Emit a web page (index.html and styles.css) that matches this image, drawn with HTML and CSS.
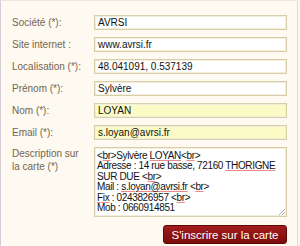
FILE: index.html
```html
<!DOCTYPE html>
<html>
<head>
    <title>Inscription</title>
    <link rel="stylesheet" href="styles.css">
</head>
<body>
    <form class="panel">
        <div class="row">
            <label>Société (*):</label>
            <div class="field">AVRSI</div>
        </div>
        <div class="row">
            <label>Site internet :</label>
            <div class="field">www.avrsi.fr</div>
        </div>
        <div class="row">
            <label>Localisation (*):</label>
            <div class="field">48.041091, 0.537139</div>
        </div>
        <div class="row">
            <label>Prénom (*):</label>
            <div class="field">Sylvère</div>
        </div>
        <div class="row">
            <label>Nom (*):</label>
            <div class="field filled">LOYAN</div>
        </div>
        <div class="row">
            <label>Email (*):</label>
            <div class="field filled">s.loyan@avrsi.fr</div>
        </div>
        <div class="row top">
            <label>Description sur<br>la carte (*)</label>
            <div class="field area">&lt;<span class="spell">br</span>&gt;Sylvère <span class="spell">LOYAN</span>&lt;<span class="spell">br</span>&gt;<br>Adresse : 14 rue basse, 72160 <span class="spell">THORIGNE</span><br>SUR DUE &lt;<span class="spell">br</span>&gt;<br>Mail : <span class="spell">s.loyan@avrsi.fr</span> &lt;<span class="spell">br</span>&gt;<br><span class="spell">Fix</span> : 0243826957 &lt;<span class="spell">br</span>&gt;<br>Mob : 0660914851<span class="grip"></span></div>
        </div>
        <div class="actions">
            <button type="button" class="submit">S'inscrire sur la carte</button>
        </div>
    </form>
</body>
</html>
```

FILE: styles.css
```css
body {
    margin: 0;
    background: #fdf8f0;
    font-family: "Liberation Sans", Arial, sans-serif;
    font-size: 10px;
}
.panel {
    width: 298px;
    height: 246px;
    box-sizing: border-box;
    padding: 14px 10px 0 11px;
    border-left: 1px solid #d6ccd6;
    border-top: 1px solid #ece4e4;
    border-right: 1px solid #e2d8dc;
    background: #fef9f1;
    display: flex;
    flex-direction: column;
    gap: 7px;
}
.row {
    display: grid;
    grid-template-columns: 82px 193px;
    align-items: center;
}
label {
    color: #75664f;
    line-height: 13px;
}
.row.top {
    align-items: start;
}
.row.top label {
    padding-top: 0;
}
.field {
    height: 15px;
    box-sizing: border-box;
    border: 1px solid #d8cda9;
    box-shadow: inset 0 0 0 1px #f3eddc;
    background: #fff;
    color: #111;
    padding: 0 3px;
    line-height: 13px;
}
.filled {
    background: #fbfbc6;
}
.area {
    position: relative;
    height: 70px;
    padding: 3px 2px;
    line-height: 10.4px;
    letter-spacing: -0.35px;
    white-space: nowrap;
}
.spell {
    text-decoration: underline solid #ec8a8a;
    text-decoration-thickness: 1px;
    text-underline-offset: 1px;
}
.grip {
    position: absolute;
    right: 1px;
    bottom: 1px;
    width: 6px;
    height: 6px;
    background: linear-gradient(135deg, transparent 45%, #aaa 45%, #aaa 55%, transparent 55%, transparent 70%, #aaa 70%, #aaa 80%, transparent 80%);
}
.actions {
    display: flex;
    justify-content: flex-end;
    padding-top: 1px;
}
.submit {
    width: 124px;
    height: 19px;
    border: 1px solid #5c0808;
    border-radius: 3px;
    background: linear-gradient(#a41c1c, #7a0c0c);
    color: #fff;
    font-family: "Liberation Sans", Arial, sans-serif;
    font-size: 11.5px;
    padding: 0;
}
```
